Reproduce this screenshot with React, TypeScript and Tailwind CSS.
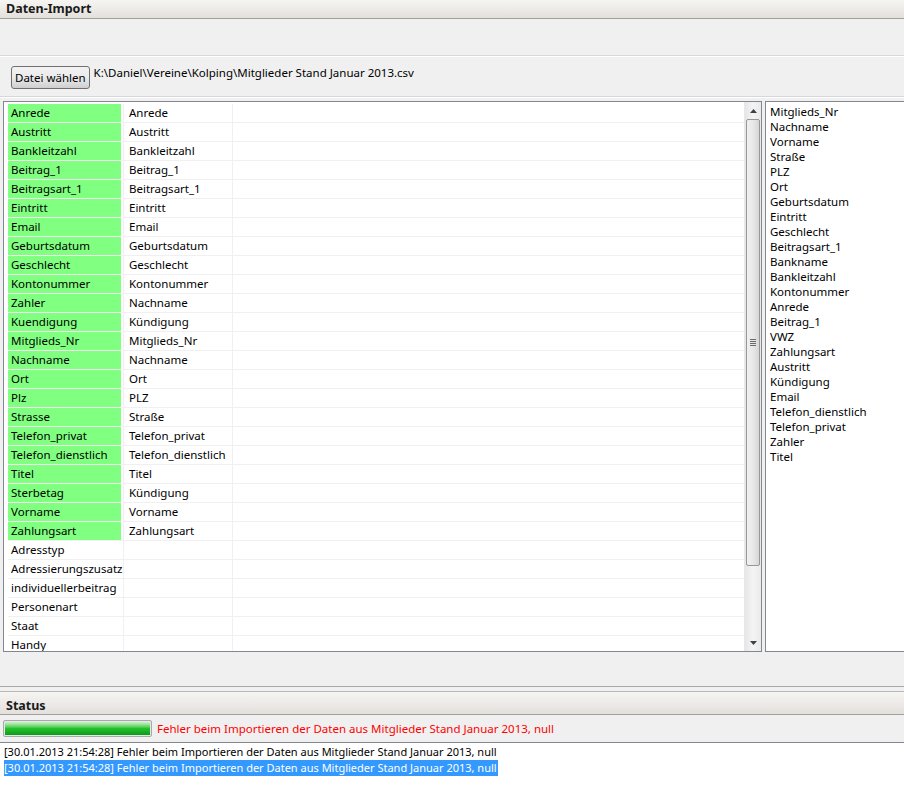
import React from 'react';

const mappings: [string, string][] = [
  ['Anrede', 'Anrede'],
  ['Austritt', 'Austritt'],
  ['Bankleitzahl', 'Bankleitzahl'],
  ['Beitrag_1', 'Beitrag_1'],
  ['Beitragsart_1', 'Beitragsart_1'],
  ['Eintritt', 'Eintritt'],
  ['Email', 'Email'],
  ['Geburtsdatum', 'Geburtsdatum'],
  ['Geschlecht', 'Geschlecht'],
  ['Kontonummer', 'Kontonummer'],
  ['Zahler', 'Nachname'],
  ['Kuendigung', 'Kündigung'],
  ['Mitglieds_Nr', 'Mitglieds_Nr'],
  ['Nachname', 'Nachname'],
  ['Ort', 'Ort'],
  ['Plz', 'PLZ'],
  ['Strasse', 'Straße'],
  ['Telefon_privat', 'Telefon_privat'],
  ['Telefon_dienstlich', 'Telefon_dienstlich'],
  ['Titel', 'Titel'],
  ['Sterbetag', 'Kündigung'],
  ['Vorname', 'Vorname'],
  ['Zahlungsart', 'Zahlungsart'],
  ['Adresstyp', ''],
  ['Adressierungszusatz', ''],
  ['individuellerbeitrag', ''],
  ['Personenart', ''],
  ['Staat', ''],
  ['Handy', ''],
];

const csvColumns = [
  'Mitglieds_Nr', 'Nachname', 'Vorname', 'Straße', 'PLZ', 'Ort', 'Geburtsdatum', 'Eintritt',
  'Geschlecht', 'Beitragsart_1', 'Bankname', 'Bankleitzahl', 'Kontonummer', 'Anrede',
  'Beitrag_1', 'VWZ', 'Zahlungsart', 'Austritt', 'Kündigung', 'Email', 'Telefon_dienstlich',
  'Telefon_privat', 'Zahler', 'Titel',
];

const logMsg = 'Fehler beim Importieren der Daten aus Mitglieder Stand Januar 2013, null';

function SectionHeader({ title, tall }: { title: string; tall?: boolean }) {
  return (
    <div
      className={
        'flex shrink-0 items-center px-[6px] border-b border-[#a0a0a0] bg-gradient-to-b from-[#f7f5f2] to-[#e3e0dc] ' +
        (tall ? 'h-[23px] pt-[6px]' : 'h-[19px]')
      }
    >
      <span className="font-bold text-[12.5px] text-[#1a1a1a] leading-none">{title}</span>
    </div>
  );
}

function Scrollbar() {
  return (
    <div className="w-[17px] shrink-0 flex flex-col bg-gradient-to-r from-[#e6e6e6] via-[#f4f4f4] to-[#eaeaea] border-l border-[#e8e8e8]">
      <div className="h-[17px] flex items-center justify-center">
        <svg width="7" height="4" viewBox="0 0 7 4">
          <path d="M0 4 L3.5 0 L7 4 Z" fill="#404040" />
        </svg>
      </div>
      <div className="h-[447px] mx-[1px] rounded-[2px] border border-[#979797] bg-gradient-to-r from-[#f0f0f0] via-[#e8e8e8] to-[#d6d6d6] flex items-center justify-center">
        <div className="flex flex-col gap-[1px]">
          <div className="w-[6px] h-[1px] bg-[#6a6a6a]" />
          <div className="w-[6px] h-[1px] bg-[#6a6a6a]" />
          <div className="w-[6px] h-[1px] bg-[#6a6a6a]" />
          <div className="w-[6px] h-[1px] bg-[#6a6a6a]" />
        </div>
      </div>
      <div className="flex-1" />
      <div className="h-[17px] flex items-center justify-center">
        <svg width="7" height="4" viewBox="0 0 7 4">
          <path d="M0 0 L7 0 L3.5 4 Z" fill="#404040" />
        </svg>
      </div>
    </div>
  );
}

export default function App() {
  return (
    <div
      className="w-[904px] h-[794px] overflow-hidden bg-[#f0f0f0] flex flex-col text-[11.5px] text-black"
      style={{ fontFamily: '"Noto Sans", "Open Sans", sans-serif' }}
    >
      <SectionHeader title="Daten-Import" />
      <div className="h-[37px] shrink-0 border-b border-[#d8d8d8] shadow-[0_1px_0_#ffffff]" />
      <div className="h-[41px] shrink-0 flex items-start pl-[11px] gap-[4px] border-b border-[#d8d8d8] shadow-[0_1px_0_#ffffff]">
        <button className="h-[23px] mt-[10px] px-[3px] rounded-[3px] border border-[#707070] bg-gradient-to-b from-[#f2f2f2] via-[#ebebeb] to-[#cfcfcf] text-[11.5px] leading-none">
          Datei wählen
        </button>
        <span className="mt-[9px] leading-[16px]">K:\Daniel\Vereine\Kolping\Mitglieder Stand Januar 2013.csv</span>
      </div>
      <div className="flex shrink-0 pt-[4px] pl-[3px] gap-[3px] h-[555px]">
        <div className="w-[759px] h-[551px] border border-[#828790] bg-white flex overflow-hidden">
          <div className="flex-1 pl-[4px] pt-[2px] overflow-hidden">
            {mappings.map(([field, col], i) => (
              <div key={i} className="flex h-[19px] border-b border-[#f0f0f0]">
                <div
                  className={
                    'w-[115px] shrink-0 pl-[3px] flex items-center border-r-2 border-white whitespace-nowrap ' +
                    (col ? 'bg-[#80ff80]' : 'bg-white')
                  }
                >
                  {field}
                </div>
                <div className="w-[110px] shrink-0 pl-[5px] flex items-center border-l border-[#f0f0f0] border-r whitespace-nowrap">
                  {col}
                </div>
                <div className="flex-1" />
              </div>
            ))}
          </div>
          <Scrollbar />
        </div>
        <div className="flex-1 h-[551px] border border-[#828790] border-r-0 bg-white pl-[4px] pt-[2px]">
          {csvColumns.map((c, i) => (
            <div key={i} className="h-[15px] leading-[15px]">
              {c}
            </div>
          ))}
        </div>
      </div>
      <div className="h-[35px] shrink-0 border-b border-[#a8a8a8]" />
      <div className="h-[5px] shrink-0 border-b border-[#b8b8b8]" />
      <SectionHeader title="Status" tall />
      <div className="flex shrink-0 items-center h-[27px] pl-[3px] gap-[5px]">
        <div className="w-[149px] h-[17px] border border-[#a8a8a8] rounded-[2px] bg-[#e6e6e6] p-[1px]">
          <div className="h-full w-full bg-gradient-to-b from-[#c9f5c9] via-[#21c22d] to-[#0d9a1a]" />
        </div>
        <span className="text-[#ff0000] text-[11.5px]">{logMsg}</span>
      </div>
      <div className="flex-1 bg-white border-t border-[#828790] pl-[4px] pt-[1px] text-[11px]">
        <div className="h-[16px] leading-[16px]">[30.01.2013 21:54:28] {logMsg}</div>
        <div className="h-[16px] leading-[16px]">
          <span className="bg-[#3399ff] text-white inline-block pr-[1px]">[30.01.2013 21:54:28] {logMsg}</span>
        </div>
      </div>
    </div>
  );
}
